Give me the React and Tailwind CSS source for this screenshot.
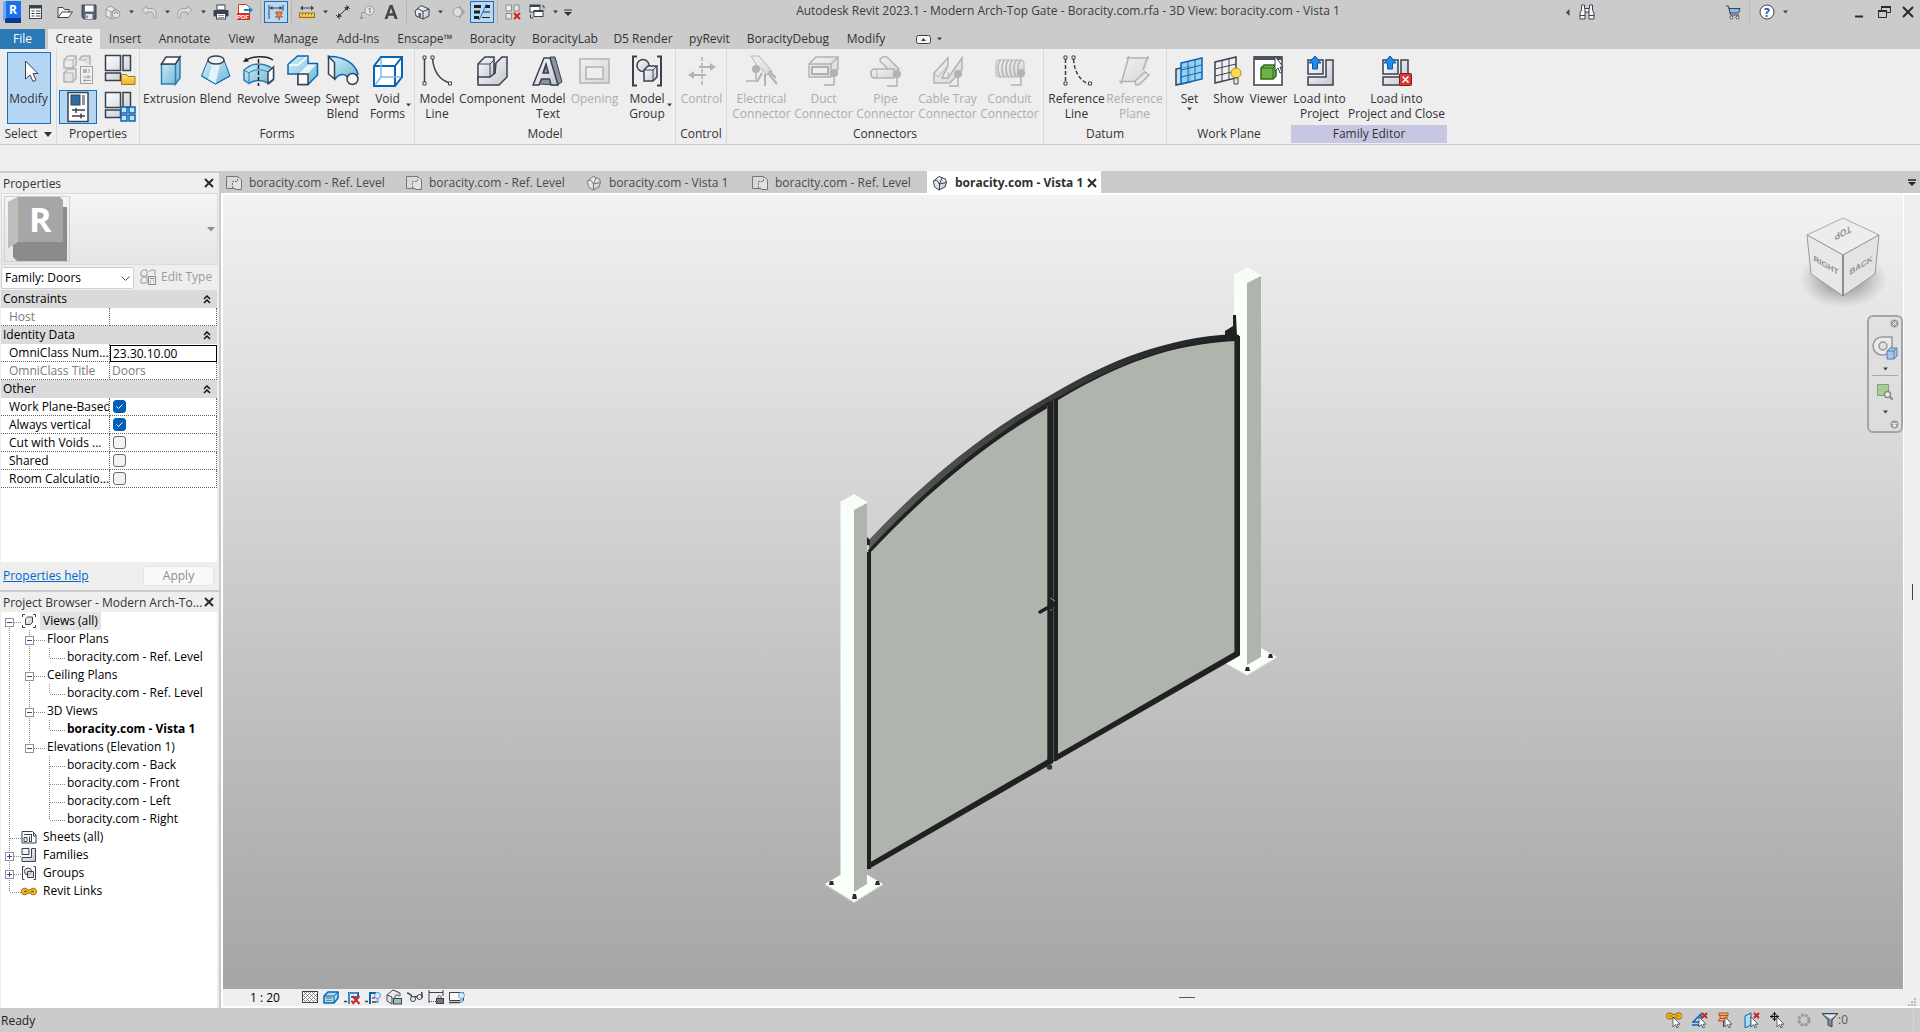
import React, { useState } from 'react';

const INK = '#3a4250';
const BLUE = '#0a64b4';
const DIM = '#b3b3b3';

// Shared gradients, referenced by id from every icon
function Gradients() {
  return (
    <svg className="absolute h-0 w-0" aria-hidden="true">
      <defs>
        <linearGradient id="blue" x1="0" y1="0" x2="1" y2="1">
          <stop offset="0" stopColor="#d2f0f8" />
          <stop offset="1" stopColor="#6fb6d4" />
        </linearGradient>
        <linearGradient id="steel" x1="0" y1="0" x2="1" y2="1">
          <stop offset="0" stopColor="#ffffff" />
          <stop offset="1" stopColor="#c3c6cf" />
        </linearGradient>
        <linearGradient id="pale" x1="0" y1="0" x2="1" y2="1">
          <stop offset="0" stopColor="#f2f2f2" />
          <stop offset="1" stopColor="#d6d6d6" />
        </linearGradient>
        <linearGradient id="gold" x1="0" y1="0" x2="0" y2="1">
          <stop offset="0" stopColor="#ffe27a" />
          <stop offset="1" stopColor="#eab320" />
        </linearGradient>
      </defs>
    </svg>
  );
}

function Svg({ size = 16, children }) {
  return (
    <svg width={size} height={size} viewBox={`0 0 ${size} ${size}`} fill="none" className="block shrink-0" aria-hidden="true">
      {children}
    </svg>
  );
}

const Caret = () => (
  <svg width="5" height="4" viewBox="0 0 5 4" className="block shrink-0" aria-hidden="true">
    <path d="M0 .5h5L2.500 3.500z" fill="#444" />
  </svg>
);

/* ---------- quick access toolbar ---------- */

const quickIcons = {
  list: <><rect x="1.500" y="1.500" width="12" height="13" fill="#fff" stroke={INK} /><path d="M1 3h13" stroke={INK} strokeWidth="3" /><path d="M3.500 7h3M3.500 9.500h3M3.500 12h3M8 7h4.500M8 9.500h4.500M8 12h4.500" stroke={INK} /></>,
  open: <><path d="M1 13.500V3.500h5l1.500 2H12v3" fill="#f4f4f4" stroke={INK} /><path d="M1 13.500l4-5.500h10.500l-4 5.500z" fill="#fff" stroke={INK} /></>,
  save: <><path d="M1 1h14v14H3l-2-2z" fill="#5a6478" stroke={INK} /><rect x="4" y="1.500" width="8.500" height="6" fill="#fff" /><rect x="4.500" y="10" width="7" height="5" fill="#e3e6ec" /><path d="M6 11.500v2.500" stroke={INK} /></>,
  sync: <><path d="M1 5l4-3 4 2 3 3v6l-5 2-6-3z" fill="url(#pale)" stroke="#999" /><path d="M1 5l5 3v6M6 8l5-3" stroke="#999" /><circle cx="11" cy="10" r="4" fill="#e3e3e3" stroke="#999" /><path d="M9 10a2 2 0 0 1 4 0" stroke="#888" /></>,
  undo: <path d="M1 6l5-4v2.500h4c3.500 0 5 2 5 5V14h-2.500v-3.500c0-1.500-1-2.500-2.500-2.500H6v2.500z" fill="#ddd" stroke="#a2a2a2" />,
  redo: <path d="M15 6l-5-4v2.500H6C2.500 4.500 1 6.500 1 9.500V14h2.500v-3.500C3.500 9 4.500 8 6 8h4v2.500z" fill="#ddd" stroke="#a2a2a2" />,
  print: <><rect x="4" y="1" width="8" height="5" fill="#fff" stroke={INK} /><rect x=".5" y="6" width="15" height="6.500" rx="1" fill="#39414e" /><rect x="3.500" y="9.500" width="9" height="5.500" fill="#fff" stroke={INK} /><path d="M5 11.500h6M5 13.500h6" stroke="#8a93a3" /></>,
  pdf: <><path d="M1.500.500h8l3 3v12h-11z" fill="#fff" stroke="#d6301d" /><rect x="0" y="9" width="13" height="7" fill="#dd2c1c" /><text x="0" y="15" fontSize="6" fontWeight="700" fill="#fff" fontFamily="Liberation Sans, sans-serif">PDF</text><path d="M7 5h5V2.500L16 6l-4 3.500V7H7z" fill="#1486e0" /></>,
  lockedDim: <><path d="M1 1v14M15 1v6M2 4h12" stroke={INK} /><path d="M1.500 4l3-2v4zM14.500 4l-3-2v4z" fill={INK} /><path d="M8 8h6v1.500h-1v2l1.500 1.500h-7L9 11.500v-2H8z" fill="#f08b4a" stroke="#b4501b" /><path d="M11 13v3" stroke={INK} /></>,
  measure: <><path d="M2 4h12" stroke={INK} /><path d="M1 4l3-2.500v5zM15 4l-3-2.500v5z" fill={INK} /><rect x=".5" y="9" width="15" height="4.500" fill="url(#gold)" stroke="#9c7106" /><path d="M3.500 9v2M6.500 9v2M9.500 9v2M12.500 9v2" stroke="#9c7106" /></>,
  aligned: <><path d="M3 13L13 3M1 11l4 4M11 1l4 4" stroke={INK} /><path d="M2 14l1.500-5L7 12.500zM14 2l-1.500 5L9 3.500z" fill={INK} /></>,
  tag: <><path d="M2.500 15V8.500H6" stroke="#999" /><path d="M1 14h3" stroke="#999" strokeWidth="2" /><circle cx="10.500" cy="6.500" r="4.500" fill="#e6e6e6" stroke="#999" /><path d="M9.500 5l1.500-1v5" stroke="#777" /></>,
  text: <path d="M1.500 15L6.700 1h2.800L14.700 15h-3l-1.100-3.300H5.500L4.400 15zM6.300 9.300h3.500L8 4z" fill="#464646" fillRule="evenodd" />,
  house: <><path d="M1 7l6-5.500L15 5v7l-6 3-7-3z" fill="url(#steel)" stroke={INK} /><path d="M1 7l3-2.500 5 3V15M9 7.500L15 5" stroke={INK} /><rect x="4.500" y="9" width="2.500" height="4" fill="#5b6575" /></>,
  section: <><path d="M9 1l6 7-6 7V12.500H8v-9h1z" fill="#a3a3a3" /><circle cx="7.500" cy="8" r="4.500" fill="#dedede" stroke="#9b9b9b" /></>,
  thin: <><path d="M0 2.500h7M11 2.500h5M0 8h6M0 13.500h5" stroke="#222" strokeWidth="3" /><path d="M9 8h7M8 13.500h8" stroke="#222" /><path d="M12.500 0L5 16" stroke="#1878d0" /></>,
  hidden: <><path d="M1 1h5.500v6H1zM9 1h5v6H9zM1 9.500h5.500v5.500H1z" fill="url(#pale)" stroke="#8b8b8b" /><path d="M9 9l6 6M15 9l-6 6" stroke="#cc2424" strokeWidth="2" /></>,
  windows: <><rect x="1" y="1" width="10" height="7" fill="#fff" stroke={INK} /><path d="M1 2h10" stroke={INK} strokeWidth="2" /><rect x="5" y="6.500" width="9" height="6" fill="#fff" stroke={INK} /><path d="M5 7.500h9M13 2h2v2.500M1.500 10.500V14H4" stroke={INK} /></>,
};

function QuickButton({ name, active }) {
  return (
    <button
      type="button"
      aria-label={name}
      className={active
        ? 'flex h-[22px] w-6 items-center justify-center border border-[#1a6fc0] bg-[#b9d9f3]'
        : 'flex h-[22px] w-6 items-center justify-center'}
    >
      <Svg>{quickIcons[name]}</Svg>
    </button>
  );
}

const QuickCaret = () => <span className="flex w-3 justify-center"><Caret /></span>;
const QuickLine = () => <span className="mx-[3px] h-[22px] w-px bg-[#b4b4b4]" />;

function TitleBar() {
  return (
    <header className="flex h-[25px] items-start pt-px">
      <div className="flex items-center">
        <button type="button" aria-label="Revit" className="flex w-6 justify-center">
          <svg width="20" height="22" viewBox="0 0 20 22" aria-hidden="true">
            <path d="M3 2h16v20H3z" fill="#0b3d86" />
            <path d="M1 2l3-2h15v17H4l-3 3z" fill="#1d6ff0" />
            <path d="M1 2l3-2v17l-3 3z" fill="#6ea6f8" />
            <text x="7" y="13" fontSize="12" fontWeight="700" fill="#fff" fontFamily="Open Sans, sans-serif">R</text>
          </svg>
        </button>
        <QuickButton name="list" />
        <span className="w-[5px]" />
        <QuickButton name="open" />
        <QuickButton name="save" />
        <QuickButton name="sync" />
        <QuickCaret />
        <QuickButton name="undo" />
        <QuickCaret />
        <QuickButton name="redo" />
        <QuickCaret />
        <QuickButton name="print" />
        <QuickButton name="pdf" />
        <QuickLine />
        <QuickButton name="lockedDim" active />
        <QuickLine />
        <QuickButton name="measure" />
        <QuickCaret />
        <QuickButton name="aligned" />
        <QuickButton name="tag" />
        <QuickButton name="text" />
        <QuickLine />
        <QuickButton name="house" />
        <QuickCaret />
        <QuickButton name="section" />
        <QuickButton name="thin" active />
        <QuickLine />
        <QuickButton name="hidden" />
        <QuickButton name="windows" />
        <QuickCaret />
        <button type="button" aria-label="Customize" className="w-[14px] px-[3px]">
          <svg width="8" height="7" viewBox="0 0 8 7" aria-hidden="true"><path d="M0 1h8" stroke="#333" /><path d="M0 3h8L4 7z" fill="#333" /></svg>
        </button>
      </div>

      <h1 className="flex-1 text-center leading-5 whitespace-nowrap text-[#3c3c3c]">
        Autodesk Revit 2023.1 - Modern Arch-Top Gate - Boracity.com.rfa - 3D View: boracity.com - Vista 1
      </h1>

      <div className="flex h-[22px] items-center">
        <button type="button" aria-label="Collapse search" className="w-3">
          <svg width="12" height="7" viewBox="0 0 12 7" aria-hidden="true"><path d="M8.500 0v7L5 3.500z" fill="#444" /></svg>
        </button>
        <button type="button" aria-label="Search" className="ml-1.5">
          <Svg>
            <path d="M2.500 1h3v3.500h5V1h3v5l1.500 3v6h-5V8h-4v7H1V9l1.500-3z" fill="#f6f6f6" stroke={INK} />
            <path d="M1 11.500h5M10 11.500h5M6 4.500V8M10 4.500V8" stroke={INK} />
          </Svg>
        </button>
        <button type="button" aria-label="Store" className="ml-[130px]">
          <Svg>
            <path d="M1 2h2.500l2 9H14" stroke={INK} />
            <path d="M4 4.500h11l-1.500 4.500H5z" fill="#8fb8ea" stroke={INK} />
            <circle cx="6.500" cy="13.500" r="1.500" fill="#fff" stroke={INK} />
            <circle cx="12.500" cy="13.500" r="1.500" fill="#fff" stroke={INK} />
          </Svg>
        </button>
        <span className="mx-2 h-[22px] w-px bg-[#bababa]" />
        <button type="button" aria-label="Help" className="ml-px">
          <Svg>
            <circle cx="8" cy="8" r="7" fill="#fff" stroke={INK} />
            <text x="5" y="12.500" fontSize="12" fontWeight="700" fill="#1a50c8" fontFamily="Open Sans, sans-serif">?</text>
          </Svg>
        </button>
        <span className="ml-2"><Caret /></span>
        <button type="button" aria-label="Minimize" className="ml-16">
          <Svg><path d="M3 12.500h8" stroke="#2b2b2b" strokeWidth="2" /></Svg>
        </button>
        <button type="button" aria-label="Restore" className="ml-2">
          <Svg><path d="M5.500 6V2.500h9v6H11M2.500 7h8v6.500h-8z" stroke="#2b2b2b" /><path d="M5 3h10M2 7h9" stroke="#2b2b2b" strokeWidth="2" /></Svg>
        </button>
        <button type="button" aria-label="Close" className="mr-1 ml-2">
          <Svg><path d="M3 3l10 10M13 3L3 13" stroke="#2b2b2b" strokeWidth="2" /></Svg>
        </button>
      </div>
    </header>
  );
}

const menuTabs = ['Insert', 'Annotate', 'View', 'Manage', 'Add-Ins', 'Enscape™', 'Boracity', 'BoracityLab', 'D5 Render', 'pyRevit', 'BoracityDebug', 'Modify'];
const menuWidths = ['w-[50px]', 'w-[69px]', 'w-[45px]', 'w-[63px]', 'w-[62px]', 'w-[72px]', 'w-[63px]', 'w-[82px]', 'w-[74px]', 'w-[59px]', 'w-[98px]', 'w-[58px]'];

function MenuTabs() {
  return (
    <nav className="flex h-6 items-end">
      <button type="button" className="h-5 w-[45px] bg-[#2a7ab5] text-white">File</button>
      <button type="button" className="ml-[3px] h-5 w-[52px] bg-[#eeeeee]">Create</button>
      {menuTabs.map((tab, i) => (
        <button key={tab} type="button" className={`h-5 whitespace-nowrap text-center ${menuWidths[i]}`}>{tab}</button>
      ))}
      <button type="button" aria-label="Ribbon display" className="ml-[21px] flex h-5 items-center gap-1.5">
        <svg width="15" height="9" viewBox="0 0 15 9" aria-hidden="true"><rect x=".5" y=".5" width="14" height="8" rx="2" fill="#f4f4f4" stroke={INK} /><path d="M5 6h5L7.500 3z" fill={INK} /></svg>
        <Caret />
      </button>
    </nav>
  );
}

/* ---------- ribbon ---------- */

const ribbonIcons = {
  Modify: <path d="M12.500 6v18l4.500-4 3 6.500 3-1.500-3-6.500h5z" fill="#fff" stroke={INK} />,
  Extrusion: <><path d="M7.500 9h14v20h-14zM21.500 9L26 2v21l-4.500 6z" fill="url(#blue)" stroke="#2b7cb8" strokeWidth="1.500" /><path d="M7.500 9L12 2h14l-4.500 7z" fill="#fff" stroke={INK} strokeWidth="1.500" /></>,
  Blend: <><path d="M8 5L1.500 21 15.500 29 30 21 24 5z" fill="url(#blue)" stroke={BLUE} /><path d="M12 9L8 24.500 15.500 29 20 9z" fill="#e1f4fa" /><path d="M1.500 21l14 8L30 21" stroke={BLUE} /><ellipse cx="16" cy="5" rx="8" ry="4" fill="#f1f1f3" stroke={INK} strokeWidth="1.500" /></>,
  Revolve: <><path d="M2 6C8 .5 24 .5 30 5" stroke="#222" strokeWidth="1.500" /><path d="M0 7l6-.5L3 2.500z" fill="#222" /><path d="M1 15l5-3.500C12 8 20 8 26 11.500l4.500 3V25L26 28.500c-7-4-14-4-20 0L1 25z" fill="url(#blue)" stroke="#2b7cb8" strokeWidth="1.500" /><path d="M30.500 12v12L25 28.500V17z" fill="#fff" stroke={INK} strokeWidth="1.500" /><path d="M1 15l5 3c5-4 13-4 19-1M6 18v10" stroke="#2b7cb8" /><path d="M15.500 4v27" stroke="#222" strokeWidth="1.500" strokeDasharray="4 2" /></>,
  Sweep: <><path d="M1 9.500L10.500 1H21v7.500h9.500V20L21 29.500H11V19H1z" fill="url(#blue)" stroke={BLUE} strokeWidth="1.500" /><path d="M2 10h9L20 2" stroke="#fff" strokeWidth="1.500" /><path d="M12 18.500L21 9.500h8l-8 9" fill="#e2f5fb" /><path d="M11 19h10v10.500H11z" fill="#fafafa" stroke={INK} strokeWidth="1.500" /></>,
  SweptBlend: <><path d="M1.500 1.500C16 1 28 8 31 19l-9 6C20 19 14 17 8 24z" fill="url(#blue)" stroke={BLUE} strokeWidth="1.500" /><path d="M1.500 1.500l6 6V24l-6-5z" fill="#f4f4f6" stroke={INK} strokeWidth="1.500" /><circle cx="25.500" cy="24" r="5.500" fill="#f7f7f9" stroke={INK} strokeWidth="1.500" /></>,
  Void: <><path d="M2 11L9 2h21v20l-7 9H2z" fill="#fff" stroke={BLUE} strokeWidth="2" /><path d="M2 11h21v20M23 11l7-9" stroke={BLUE} strokeWidth="2" /><path d="M9 3v19h20M9 22l-6 8" stroke="#79bdf2" strokeWidth="1.500" /></>,
  ModelLine: <><path d="M3.500 3v25M11.500 3c1 14 8 22 17 25" stroke={INK} strokeWidth="1.500" /><path d="M2 1h3v3H2zM2 27h3v3H2zM10 1h3v3h-3zM27.500 27h3v3h-3z" fill="#fff" stroke={INK} /></>,
  Component: <><path d="M2 9l7-7h9v18l-5 5H2z" fill="url(#steel)" stroke={INK} strokeWidth="1.500" /><path d="M20 8l6-6h5v20l-8 8H2v-8h12l5-4z" fill="url(#steel)" stroke={INK} strokeWidth="1.500" /><path d="M14 9v13M19 8v10M2 9h12l4-4" stroke={INK} /></>,
  ModelText: <><path d="M7 29L18 2h5l7 25-5 3z" fill="#8b93a3" stroke={INK} /><path d="M1 30L12 3h6l8 27h-7l-1.500-6H9.500L7 30zM11 18h5.500L14 9z" fill="url(#steel)" fillRule="evenodd" stroke={INK} strokeWidth="1.500" /></>,
  Opening: <><rect x="1" y="4" width="29" height="24" fill="url(#pale)" stroke={DIM} strokeWidth="1.500" /><rect x="7" y="12" width="17" height="12" fill="#eee" stroke={DIM} strokeWidth="1.500" /></>,
  ModelGroup: <><path d="M6 1.500H2v29h4M26 1.500h4v29h-4" stroke={INK} strokeWidth="2" /><circle cx="12" cy="10.500" r="6" fill="url(#steel)" stroke={INK} strokeWidth="1.500" /><path d="M13 15l4-4h9v11l-4 4h-9z" fill="url(#steel)" stroke={INK} strokeWidth="1.500" /><path d="M13 15h9v11M22 15l4-4" stroke={INK} /></>,
  Control: <><path d="M16 2v28" stroke={DIM} strokeDasharray="4 2" strokeWidth="1.500" /><path d="M13 12h13M6 20h14" stroke={DIM} strokeWidth="2" /><path d="M24 8l6 4-6 4zM8 16l-6 4 6 4z" fill={DIM} /></>,
  Electrical: <><path d="M5 1h8l13 15-5 4L10 9z" fill="url(#pale)" stroke={DIM} /><path d="M19 19v12M22 18l9 11M23 16l7 7M16 18l-5 9" stroke={DIM} strokeWidth="2" /><circle cx="10" cy="14" r="4" fill={DIM} /><path d="M10 17v9H0" stroke={DIM} strokeWidth="1.500" /></>,
  Duct: <><path d="M1 9l7-7h22v12l-7 8H1z" fill="url(#pale)" stroke={DIM} strokeWidth="1.500" /><path d="M1 9h22v13M23 9l7-7" stroke={DIM} strokeWidth="1.500" /><rect x="4" y="12" width="16" height="7" fill="#eee" stroke="#9e9e9e" strokeWidth="1.500" /><circle cx="26" cy="18" r="4" fill={DIM} /><path d="M26 20v10H16" stroke={DIM} strokeWidth="1.500" /></>,
  Pipe: <><path d="M10 6c0-4 5-6 8-3l11 11-6 5z" fill="url(#pale)" stroke={DIM} strokeWidth="1.500" /><path d="M4 14h20v9H4c-4-1-4-8 0-9z" fill="url(#pale)" stroke={DIM} strokeWidth="1.500" /><ellipse cx="4" cy="18.500" rx="3" ry="4.500" stroke={DIM} /><circle cx="27" cy="19" r="4" fill={DIM} /><path d="M27 21v10H17" stroke={DIM} strokeWidth="1.500" /></>,
  Tray: <><path d="M2 18L16 3v8l-6 12h6L30 3v12L18 28H2z" fill="url(#pale)" stroke={DIM} strokeWidth="1.500" /><path d="M2 18l4 4L16 11M16 23V17" stroke={DIM} /><circle cx="26" cy="19" r="4" fill={DIM} /><path d="M26 21v10H17" stroke={DIM} strokeWidth="1.500" /></>,
  Conduit: <><rect x="2" y="5" width="28" height="17" rx="3" fill="url(#pale)" stroke={DIM} /><path d="M7 5c-4 3-4 14 0 17M11 5c-4 3-4 14 0 17M15 5c-4 3-4 14 0 17M19 5c-4 3-4 14 0 17M23 5c-4 3-4 14 0 17M27 5c-4 3-4 14 0 17" stroke={DIM} strokeWidth="1.500" /><circle cx="27" cy="18" r="4" fill={DIM} /><path d="M27 20v10H17" stroke={DIM} strokeWidth="1.500" /></>,
  RefLine: <><path d="M4.500 4v24M12.500 4c1 13 6 21 15 25" stroke={INK} strokeWidth="1.500" strokeDasharray="4 2" /><path d="M3 1h3v3H3zM3 27h3v3H3zM11 1h3v3h-3zM27.500 27h3v3h-3z" fill="#fff" stroke={INK} /></>,
  RefPlane: <><path d="M9 3h21l-8 24H2z" fill="url(#pale)" /><path d="M7 3h23M0 26.500h22M10 1L2 29M29 1l-5 14" stroke={DIM} strokeWidth="1.500" /><path d="M17 30l-1-4 10-9 4 3-9 9z" fill="#e6e6e6" stroke={DIM} strokeWidth="1.500" /></>,
  Set: <><path d="M2 14v16l14-3V11z" fill="#bfe0f5" stroke={INK} strokeWidth="1.500" /><path d="M7 8l21-5v21L7 29z" fill="#8ccbee" fillOpacity=".85" stroke={BLUE} strokeWidth="1.500" /><path d="M14 6.500v21M21 5v21M7 15l21-5M7 22l21-5" stroke={BLUE} /></>,
  Show: <><path d="M2 7l21-5v21L2 28z" fill="#f0f0f2" stroke={INK} strokeWidth="1.500" /><path d="M9 5.500v21M16 4v21M2 14l21-5M2 21l21-5" stroke={INK} /><circle cx="23" cy="18" r="5" fill="#ffd94f" stroke="#b98a10" /><path d="M21 23h4v6h-4z" fill="#e8e8ea" stroke={INK} /></>,
  Viewer: <><rect x="1" y="2" width="28" height="28" fill="#fff" stroke={INK} strokeWidth="1.500" /><path d="M1 3h28" stroke="#4d5260" strokeWidth="4" /><path d="M8 13l3-3h12v11l-3 3H8z" fill="#6fb04c" stroke="#2c6b12" strokeWidth="1.500" /><path d="M8 13h12v11M20 13l3-3" stroke="#2c6b12" /><path d="M22 1v15l3-3 2 5 2-1-2-5h3z" fill="#fff" stroke={INK} /></>,
  Load: <><path d="M4 5h15v14H4zM22 5h7v25H4v-8h18z" fill="url(#steel)" stroke={INK} strokeWidth="1.500" /><path d="M11 1l6 7h-3.500v6h-5V8H5z" fill="#1f8df0" stroke="#0a56a8" /></>,
  LoadClose: <><path d="M2 5h15v14H2zM20 5h7v25H2v-8h18z" fill="url(#steel)" stroke={INK} strokeWidth="1.500" /><path d="M9 1l6 7h-3.500v6h-5V8H3z" fill="#1f8df0" stroke="#0a56a8" /><rect x="18.500" y="18.500" width="12" height="12" rx="1" fill="#d63a3a" stroke="#8f1515" /><path d="M21.500 21.500l6 6M27.500 21.500l-6 6" stroke="#fff" strokeWidth="1.500" /></>,
};

function Tool({ icon, lines, width, disabled, caret, below }) {
  return (
    <button
      type="button"
      disabled={disabled}
      className={`relative flex h-[73px] flex-col items-center pt-[3px] ${width} ${disabled ? 'text-[#adadad]' : ''}`}
    >
      <Svg size={32}>{ribbonIcons[icon]}</Svg>
      <span className="mt-1 leading-[15px] whitespace-nowrap">
        {lines.map((line) => <span key={line} className="block">{line}</span>)}
      </span>
      {below && <span className="mt-px"><Caret /></span>}
      {caret && <span className="absolute right-[2px] bottom-[18px]"><Caret /></span>}
    </button>
  );
}

function Panel({ label, width, children, accent, last }) {
  return (
    <section className={`flex shrink-0 flex-col ${width} ${last ? '' : 'border-r border-[#d9d9d9]'}`}>
      <div className="flex h-[76px] justify-center pt-[3px] pl-px">{children}</div>
      <h2 className={`h-[18px] text-center leading-[18px] ${accent ? 'bg-[#c7c7e4]' : ''}`}>{label}</h2>
    </section>
  );
}

const plan = (
  <path d="M1.500 1.500h15v15h-15zM19 1.500h7.500v15H19zM1.500 19h15v7.500h-15z" fill="url(#steel)" stroke={INK} strokeWidth="1.500" />
);

function Ribbon() {
  return (
    <div className="flex h-24 shrink-0 border-b border-[#c8c8c8] bg-[#eeeeee]">
      <Panel width="w-[57px]" label={<span className="flex items-center justify-center gap-1.5">Select <svg width="8" height="5" viewBox="0 0 8 5" aria-hidden="true"><path d="M0 0h8L4 5z" fill="#333" /></svg></span>}>
        <button type="button" className="flex h-[72px] w-11 flex-col items-center border border-[#1a6fc0] bg-[#b5d6f3] pt-0.5">
          <Svg size={32}>{ribbonIcons.Modify}</Svg>
          <span className="mt-1 leading-[15px]">Modify</span>
        </button>
      </Panel>
      <Panel width="w-[83px]" label="Properties">
        <div className="grid grid-cols-2 gap-x-1 gap-y-px">
          <button type="button" aria-label="Family types" className="flex h-9 w-[38px] items-center justify-center">
            <Svg size={32}>
              <path d="M2 6l4-4h8v9l-3 3H2zM17 6l3-4h8v9M2 19l4-4h8v9l-3 4H2z" fill="url(#pale)" stroke={DIM} strokeWidth="1.500" />
              <path d="M2 6h9v8M11 6l3-4M2 19h9v9M17 6h8" stroke={DIM} />
              <rect x="18.500" y="12.500" width="12" height="17" fill="#f0f0f0" stroke="#a0a0a0" />
              <path d="M21 15h4v4h-4z" fill={DIM} /><path d="M27 15v4M21 23h8M21 26.500h8M26 21v4M23 25v3" stroke="#a0a0a0" />
            </Svg>
          </button>
          <button type="button" aria-label="Family category" className="flex h-9 w-[38px] items-center justify-center">
            <Svg size={32}>
              {plan}
              <path d="M17.500 30.500v-10h5l1.500 2h7v8z" fill="url(#gold)" stroke="#a57a0c" />
            </Svg>
          </button>
          <button type="button" aria-label="Properties palette" className="flex h-[34px] w-[38px] items-center justify-center border border-[#1a6fc0] bg-[#b5d6f3]">
            <Svg size={32}>
              <rect x="6" y="1.500" width="20" height="29" fill="#fff" stroke={INK} strokeWidth="1.500" />
              <rect x="9" y="4" width="9" height="10" fill="#2d6ba6" stroke={INK} /><path d="M21.500 4v10" stroke="#9098a6" strokeWidth="3" />
              <path d="M10 19h13M10 25h13M14 17v5M19 22.500v5" stroke={INK} strokeWidth="1.500" />
            </Svg>
          </button>
          <button type="button" aria-label="Family types grid" className="flex h-[34px] w-[38px] items-center justify-center">
            <Svg size={32}>
              {plan}
              <path d="M17 16h6v6h-6zM25 16h6v6h-6zM17 24h6v6h-6zM25 24h6v6h-6z" fill="#bfe3f7" stroke={BLUE} strokeWidth="1.500" />
            </Svg>
          </button>
        </div>
      </Panel>
      <Panel width="w-[275px]" label="Forms">
        <Tool icon="Extrusion" lines={['Extrusion']} width="w-[54px]" />
        <Tool icon="Blend" lines={['Blend']} width="w-[38px]" />
        <Tool icon="Revolve" lines={['Revolve']} width="w-12" />
        <Tool icon="Sweep" lines={['Sweep']} width="w-10" />
        <Tool icon="SweptBlend" lines={['Swept', 'Blend']} width="w-10" />
        <Tool icon="Void" lines={['Void', 'Forms']} width="w-[50px]" caret />
      </Panel>
      <Panel width="w-[261px]" label="Model">
        <Tool icon="ModelLine" lines={['Model', 'Line']} width="w-10" />
        <Tool icon="Component" lines={['Component']} width="w-[70px]" />
        <Tool icon="ModelText" lines={['Model', 'Text']} width="w-[42px]" />
        <Tool icon="Opening" lines={['Opening']} width="w-[51px]" disabled />
        <Tool icon="ModelGroup" lines={['Model', 'Group']} width="w-[54px]" caret />
      </Panel>
      <Panel width="w-[51px]" label="Control">
        <Tool icon="Control" lines={['Control']} width="w-12" disabled />
      </Panel>
      <Panel width="w-[317px]" label="Connectors">
        <Tool icon="Electrical" lines={['Electrical', 'Connector']} width="w-[62px]" disabled />
        <Tool icon="Duct" lines={['Duct', 'Connector']} width="w-[62px]" disabled />
        <Tool icon="Pipe" lines={['Pipe', 'Connector']} width="w-[62px]" disabled />
        <Tool icon="Tray" lines={['Cable Tray', 'Connector']} width="w-[62px]" disabled />
        <Tool icon="Conduit" lines={['Conduit', 'Connector']} width="w-[62px]" disabled />
      </Panel>
      <Panel width="w-[123px]" label="Datum">
        <Tool icon="RefLine" lines={['Reference', 'Line']} width="w-[58px]" />
        <Tool icon="RefPlane" lines={['Reference', 'Plane']} width="w-[58px]" disabled />
      </Panel>
      <Panel width="w-[124px]" label="Work Plane" last>
        <Tool icon="Set" lines={['Set']} width="w-10" below />
        <Tool icon="Show" lines={['Show']} width="w-[38px]" />
        <Tool icon="Viewer" lines={['Viewer']} width="w-[42px]" />
      </Panel>
      <Panel width="w-[156px]" label="Family Editor" accent last>
        <Tool icon="Load" lines={['Load into', 'Project']} width="w-[54px]" />
        <Tool icon="LoadClose" lines={['Load into', 'Project and Close']} width="w-[100px]" />
      </Panel>
    </div>
  );
}

/* ---------- left side ---------- */

function PaneHeader({ title }) {
  return (
    <div className="flex h-5 shrink-0 items-center justify-between pr-[5px] pl-[3px] text-[#333]">
      <h2 className="pt-0.5 leading-[18px] whitespace-nowrap">{title}</h2>
      <button type="button" aria-label="Close pane" className="shrink-0">
        <svg width="10" height="10" viewBox="0 0 10 10" aria-hidden="true"><path d="M1 1l8 8M9 1L1 9" stroke="#2b2b2b" strokeWidth="2" /></svg>
      </button>
    </div>
  );
}

function GroupRow({ title }) {
  return (
    <tr>
      <th colSpan={2} scope="colgroup" className="h-[18px] bg-[#dadada] p-0 px-0.5 text-left font-normal">
        <span className="flex items-center justify-between pr-1">
          {title}
          <svg width="8" height="9" viewBox="0 0 8 9" fill="none" aria-hidden="true"><path d="M1 4l3-3 3 3M1 8l3-3 3 3" stroke="#111" strokeWidth="1.500" /></svg>
        </span>
      </th>
    </tr>
  );
}

const nameCell = 'h-[18px] overflow-hidden whitespace-nowrap border-r border-b border-dotted border-[#666] p-0 pl-2 text-left font-normal leading-4';
const valueCell = 'h-[18px] border-r border-b border-dotted border-[#666] p-0 leading-4';

function CheckRow({ id, label, initial }) {
  const [checked, setChecked] = useState(initial);
  return (
    <tr>
      <th scope="row" className={nameCell}><label htmlFor={id}>{label}</label></th>
      <td className={valueCell}>
        <span className="relative ml-[3px] block h-[13px] w-[13px]">
          <input
            id={id}
            type="checkbox"
            checked={checked}
            onChange={(e) => setChecked(e.target.checked)}
            className="block h-[13px] w-[13px] appearance-none rounded-[3px] border border-[#6b6b6b] bg-[#f3f3f3] checked:border-[#005fb8] checked:bg-[#005fb8]"
          />
          {checked && (
            <svg width="13" height="13" viewBox="0 0 13 13" fill="none" className="pointer-events-none absolute inset-0" aria-hidden="true"><path d="M3.500 6.500l2 2 4-4" stroke="#fff" /></svg>
          )}
        </span>
      </td>
    </tr>
  );
}

function PropertiesPane() {
  const [omni, setOmni] = useState('23.30.10.00');
  return (
    <section className="flex h-[417px] shrink-0 flex-col">
      <PaneHeader title="Properties" />
      <div className="mx-px flex h-[72px] items-center justify-between border border-[#dcdcdc] bg-linear-to-b from-[#f5f5f5] to-[#e5e5e5] px-0.5">
        <div className="border border-[#d0d0d0]">
          <svg width="64" height="64" viewBox="0 0 64 64" className="block" aria-hidden="true">
            <path d="M8 10h54v54H12l-4-4z" fill="#8b8b8b" />
            <path d="M3 5l10-5h42l3 3v42H13L3 51z" fill="#a6a6a6" />
            <path d="M3 5l10-5v45L3 51z" fill="#bdbdbd" />
            <text x="24" y="35" fontSize="34" fontWeight="700" fill="#fff" fontFamily="Open Sans, sans-serif">R</text>
          </svg>
        </div>
        <svg width="8" height="5" viewBox="0 0 8 5" aria-hidden="true"><path d="M0 0h8L4 4.500z" fill="#8e8e8e" /></svg>
      </div>
      <div className="flex h-[25px] items-center pr-2 pl-px">
        <div className="relative w-[133px] shrink-0">
          <select aria-label="Family" className="h-[22px] w-full appearance-none rounded-xs border border-[#cfcfcf] bg-white pl-[3px] text-black">
            <option>Family: Doors</option>
          </select>
          <svg width="9" height="5" viewBox="0 0 9 5" fill="none" className="pointer-events-none absolute top-[9px] right-1" aria-hidden="true"><path d="M.5.500l4 4 4-4" stroke="#555" /></svg>
        </div>
        <button type="button" disabled className="mb-0.5 ml-1.5 flex items-center gap-[5px] whitespace-nowrap text-[#9c9c9c]">
          <Svg><path d="M1 3l2-2h4v6H1zM9 3l2-2h4v5M1 10l2-2h4v6H1z" stroke="#9c9c9c" /><rect x="8.500" y="7.500" width="7" height="8" fill="#eee" stroke="#8c8c8c" /><path d="M10 9.500h4M10 12h1M13 12h1M10 14h1" stroke="#8c8c8c" /></Svg>
          Edit Type
        </button>
      </div>
      <div className="mr-0.5 ml-px flex-1 bg-white">
        <table className="w-full table-fixed border-separate border-spacing-0 text-black">
          <colgroup><col className="w-[109px]" /><col /></colgroup>
          <tbody>
            <GroupRow title="Constraints" />
            <tr><th scope="row" className={`${nameCell} text-[#7a7a7a]`}>Host</th><td className={valueCell} /></tr>
            <GroupRow title="Identity Data" />
            <tr>
              <th scope="row" className={nameCell}><label htmlFor="omni">OmniClass Num...</label></th>
              <td className="h-[18px] p-0">
                <input id="omni" value={omni} onChange={(e) => setOmni(e.target.value)} className="block h-[17px] w-full border border-black bg-white px-0.5 leading-[14px]" />
              </td>
            </tr>
            <tr className="text-[#7a7a7a]"><th scope="row" className={nameCell}>OmniClass Title</th><td className={`${valueCell} pl-0.5`}>Doors</td></tr>
            <GroupRow title="Other" />
            <CheckRow id="workPlane" label="Work Plane-Based" initial />
            <CheckRow id="vertical" label="Always vertical" initial />
            <CheckRow id="voids" label="Cut with Voids ..." initial={false} />
            <CheckRow id="shared" label="Shared" initial={false} />
            <CheckRow id="room" label="Room Calculatio..." initial={false} />
          </tbody>
        </table>
      </div>
      <div className="flex h-7 items-center justify-between pr-[5px] pl-[3px]">
        <a href="#help" className="text-[#0066cc] underline">Properties help</a>
        <button type="button" disabled className="h-5 w-[71px] rounded-sm border border-[#e6e6e6] bg-[#f9f9f9] text-[#8c8c8c]">Apply</button>
      </div>
    </section>
  );
}

const treeIcons = {
  views: <><path d="M4 1.500H1.500V4M12 1.500h2.500V4M1.500 12v2.500H4M14.500 12v2.500H12" stroke={INK} /><path d="M4.500 6l2-2h5v5.500l-2 2h-5z" fill="url(#steel)" stroke={INK} /></>,
  sheets: <><path d="M1 2.500h10.500L15 6v8H1z" fill="#fff" stroke={INK} /><path d="M3 5.500h7M3 8.500h3v4H3zM8.500 12.500V7.500M10.500 5v7.500H8M12.500 3v4H15" stroke={INK} /></>,
  families: <><path d="M1 1.500h7v6H1zM10.500 1.500h4v13H1v-4h9.500z" fill="url(#steel)" stroke={INK} /></>,
  groups: <><path d="M3.500 1.500h-2v13h2M12.500 1.500h2v13h-2" stroke={INK} /><circle cx="7" cy="6.500" r="3.500" fill="url(#steel)" stroke={INK} /><path d="M6.500 6.500h6v6h-6z" fill="#d5d8de" fillOpacity=".7" stroke={INK} /></>,
  links: <><path d="M7 7C5.500 4.500.5 4.500.5 8.500S5.500 12.500 7 10h2c1.500 2.500 6.500 2.500 6.500-1.500S10.500 4.500 9 7z" fill="#f5b921" stroke="#8a6208" /><path d="M3 8.500h3M10 8.500h3" stroke="#8a6208" strokeWidth="1.500" /></>,
};

// guides: | through, + tee, L corner, m/M/e expanded box (first/middle/last), p collapsed box
const tree = [
  { guides: 'm', icon: 'views', label: 'Views (all)', selected: true },
  { guides: '|M', label: 'Floor Plans' },
  { guides: '||L', label: 'boracity.com - Ref. Level' },
  { guides: '|M', label: 'Ceiling Plans' },
  { guides: '||L', label: 'boracity.com - Ref. Level' },
  { guides: '|M', label: '3D Views' },
  { guides: '||L', label: 'boracity.com - Vista 1', bold: true },
  { guides: '|e', label: 'Elevations (Elevation 1)' },
  { guides: '| +', label: 'boracity.com - Back' },
  { guides: '| +', label: 'boracity.com - Front' },
  { guides: '| +', label: 'boracity.com - Left' },
  { guides: '| L', label: 'boracity.com - Right' },
  { guides: '+', icon: 'sheets', label: 'Sheets (all)' },
  { guides: 'p', icon: 'families', label: 'Families' },
  { guides: 'p', icon: 'groups', label: 'Groups' },
  { guides: 'L', icon: 'links', label: 'Revit Links' },
];

function Guide({ kind, wide }) {
  const up = '|+LMep'.includes(kind);
  const down = '|+mMp'.includes(kind);
  const side = '+LmMep'.includes(kind);
  const box = 'mMep'.includes(kind);
  const w = wide ? 24 : 20;
  return (
    <svg width={w} height="18" viewBox={`0 0 ${w} 18`} fill="none" className="block shrink-0" aria-hidden="true">
      <g stroke="#8a8a8a" strokeDasharray="1 1">
        {up && <path d="M8.500 0v10" />}
        {down && <path d="M8.500 10v8" />}
        {side && <path d={`M9 10.500h${w - 9}`} />}
      </g>
      {box && <rect x="4.500" y="6.500" width="8" height="8" fill="#fff" stroke="#919191" />}
      {box && <path d="M6 10.500h5" stroke="#2b4fa0" />}
      {kind === 'p' && <path d="M8.500 8v5" stroke="#2b4fa0" />}
    </svg>
  );
}

function ProjectBrowser() {
  return (
    <section className="flex min-h-0 flex-1 flex-col border-t-2 border-[#cbcbcb]">
      <PaneHeader title="Project Browser - Modern Arch-To..." />
      <ul className="mr-0.5 ml-px flex-1 overflow-hidden bg-white text-black">
        {tree.map((row, i) => (
          <li key={i} className="flex h-[18px] items-center whitespace-nowrap">
            {row.guides.split('').map((kind, g) => (
              <Guide key={g} kind={kind} wide={g > 0 && g === row.guides.length - 1} />
            ))}
            {row.icon && <Svg>{treeIcons[row.icon]}</Svg>}
            <span className={`leading-[18px] ${row.icon ? 'ml-[3px] px-[3px]' : 'px-0.5'} ${row.selected ? 'bg-[#e2e2e2]' : ''} ${row.bold ? 'font-bold' : ''}`}>{row.label}</span>
          </li>
        ))}
      </ul>
    </section>
  );
}

/* ---------- drawing area ---------- */

const PlanIcon = () => (
  <Svg><path d="M.5 1.500h11v12H.5z" fill="#d9d9d9" stroke="#777" /><path d="M6 8h4V2.500h3l2.500 2.500v9.500H9V11H6z" fill="#e2e2e2" /><path d="M11.500 2.500H13L15.500 5v9.500H9.500v-1" stroke="#777" /><path d="M6.500 13V6.500h5V3" stroke="#777" strokeDasharray="2 1" /></Svg>
);
const CubeIcon = ({ color }) => (
  <Svg><path d="M1.500 6L7 1.500 13.500 4l1 3.500L13 12l-6 3-4.500-3z" fill="url(#steel)" stroke={color} /><path d="M1.500 6l3-1 3 4V15M7.500 9L10 3M7.500 9l7-1.500" stroke={color} /></Svg>
);

const viewTabs = [
  { label: 'boracity.com - Ref. Level', width: 'w-[180px]' },
  { label: 'boracity.com - Ref. Level', width: 'w-[180px]' },
  { label: 'boracity.com - Vista 1', width: 'w-[166px]', cube: true },
  { label: 'boracity.com - Ref. Level', width: 'w-[180px]' },
];

function ViewTabs() {
  return (
    <div className="flex h-[22px] shrink-0 bg-[#cbcbcb] pr-1">
      {viewTabs.map((tab, i) => (
        <button key={i} type="button" className={`flex items-center gap-[7px] pt-0.5 pl-[5px] whitespace-nowrap text-[#4a4a4a] ${tab.width}`}>
          {tab.cube ? <CubeIcon color="#777" /> : <PlanIcon />}
          {tab.label}
        </button>
      ))}
      <div className="flex h-full w-[174px] items-center justify-between bg-white pt-0.5 pr-1 pl-[5px]">
        <button type="button" className="flex items-center gap-[7px] font-bold whitespace-nowrap text-[#2f2f2f]">
          <CubeIcon color={INK} />
          boracity.com - Vista 1
        </button>
        <button type="button" aria-label="Close view">
          <svg width="10" height="10" viewBox="0 0 10 10" aria-hidden="true"><path d="M1 1l8 8M9 1L1 9" stroke="#2b2b2b" strokeWidth="2" /></svg>
        </button>
      </div>
      <button type="button" aria-label="View list" className="ml-auto">
        <svg width="8" height="7" viewBox="0 0 8 7" aria-hidden="true"><path d="M0 1h8" stroke="#222" strokeWidth="1.500" /><path d="M0 3h8L4 7z" fill="#222" /></svg>
      </button>
    </div>
  );
}

function Gate() {
  const panel = '#afb4ad';
  const dark = '#202221';
  return (
    <svg viewBox="223 195 1680 794" className="absolute inset-0 h-full w-full" role="img" aria-label="Gate model">
      <defs>
        <linearGradient id="archLeft" x1="0" y1="1" x2="1" y2="0"><stop offset="0" stopColor="#5c5e5d" /><stop offset="1" stopColor="#3a3c3b" /></linearGradient>
        <linearGradient id="archRight" x1="0" y1="1" x2="1" y2="0"><stop offset="0" stopColor="#3e403f" /><stop offset="1" stopColor={dark} /></linearGradient>
      </defs>
      {/* right post */}
      <path d="M1225 663l22 12 30-18-16-9-21 8z" fill="#fbfffa" />
      <path d="M1225 663l22 12 30-18v1l-30 18z" fill="#d9ddd7" />
      <path d="M1234 275h13v390l-13-8z" fill="#f9fff9" />
      <path d="M1247 282l14-7v382l-14 8z" fill={panel} />
      <path d="M1233 275l14-8 15 8.500-15 7.500z" fill="#f7fcf6" />
      {/* leaves */}
      <path d="M868 550C930 484 985 440 1050 404V762L868 867z" fill={panel} />
      <path d="M1055 400c60-34 115-57 182-60v313l-182 105z" fill={panel} />
      {/* arch */}
      <path d="M868 541C927 478 985 432 1049 396l3 6C990 438 930 487 870 552z" fill="url(#archLeft)" />
      <path d="M868 550.500C928 485.500 985 440 1050 401v5.500C990 441 930 489 869 554z" fill={dark} />
      <path d="M1049 396c60-36 117-58 184-62l6 1v6c-67 2-122 24-181 59l-8 4z" fill="url(#archRight)" />
      <path d="M1052 401c60-35 120-60 187-63v2.500c-67 2-122 24-181 59.500z" fill={dark} />
      {/* stiles and rails */}
      <path d="M867 552h4v317h-4z" fill={dark} />
      <path d="M1047 403l11-6v363l-11 4z" fill={dark} />
      <path d="M1047.500 406v354M1053.500 400v360" stroke="#4b4d4c" />
      <path d="M1234 336h6v319h-6z" fill={dark} />
      <path d="M1234.500 341v312" stroke="#5b5d5b" />
      <path d="M868 863.500l181-105 4 3v1.500L868 869.500z" fill={dark} />
      <path d="M1055 755.500l181-104.500 4 4.500-185 106z" fill={dark} />
      {/* hardware */}
      <path d="M1233 315h3l1 21h-12v-5l8-5z" fill={dark} />
      <path d="M867 537l3 3v5h-3z" fill={dark} />
      <path d="M1040 612l16-9" stroke={dark} strokeWidth="3.500" strokeLinecap="round" />
      <path d="M1050 598l5 3M1051 609v2" stroke="#888" />
      <circle cx="1049.500" cy="767" r="2.800" fill="#343635" />
      {/* left post */}
      <path d="M825 884l29-17 29 17-29 18z" fill="#fbfffa" />
      <path d="M825 884l29 18 29-18v1l-29 18-29-18z" fill="#d9ddd7" />
      <path d="M840.500 502h14v390l-14-8z" fill="#f9fff9" />
      <path d="M854 509l13-7v382l-13 8z" fill={panel} />
      <path d="M840 502l14-8 14 8.500-14 7.500z" fill="#f7fcf6" />
      <g fill="#2a2c2b">
        <path d="M830 881h3l1 4h-5zM876 881h3l1 4h-5zM853 894h3l1 5h-5zM1246 667h3l1 4h-5zM1269 654h3l1 4h-5z" />
      </g>
    </svg>
  );
}

function ViewCube() {
  return (
    <svg width="90" height="95" viewBox="0 0 90 95" className="absolute top-[20px] right-[15px]" role="img" aria-label="View cube">
      <defs>
        <radialGradient id="cubeShadow"><stop offset="0.300" stopColor="#777" stopOpacity="0.700" /><stop offset="1" stopColor="#999" stopOpacity="0" /></radialGradient>
      </defs>
      <ellipse cx="45" cy="64" rx="44" ry="29" fill="url(#cubeShadow)" />
      <path d="M9 20L45 3l36 17-36 20z" fill="#ededed" stroke="#aaa" />
      <path d="M9 20l36 20v41L13 59z" fill="#e8e8e8" stroke="#999" />
      <path d="M45 40l36-20-4 39-32 22z" fill="#e3e3e3" stroke="#999" />
      <path d="M45 40v41" stroke="#666" />
      <g fill="#8f9298" fontSize="9" fontWeight="700" fontFamily="Liberation Sans, sans-serif">
        <text transform="translate(45 19) rotate(152) skewX(-20)" textAnchor="middle" x="0" y="4">TOP</text>
        <text transform="translate(28 50) skewY(30)" textAnchor="middle" x="0" y="3" fontSize="8">RIGHT</text>
        <text transform="translate(63 50) skewY(-32)" textAnchor="middle" x="0" y="3" fontSize="8">BACK</text>
      </g>
    </svg>
  );
}

function NavBar() {
  return (
    <div className="absolute top-[120px] right-0 flex h-[118px] w-9 flex-col items-center rounded-md border-2 border-[#a5a5a5] bg-[#dedede]/60 py-0.5">
      <button type="button" aria-label="Close navigation bar" className="mr-0.5 self-end">
        <svg width="9" height="9" viewBox="0 0 9 9" className="block" aria-hidden="true"><circle cx="4.500" cy="4.500" r="4" fill="#9c9c9c" /><path d="M2.500 2.500l4 4M6.500 2.500l-4 4" stroke="#fff" /></svg>
      </button>
      <button type="button" aria-label="Steering wheel" className="mt-[7px] flex flex-col items-center gap-[6px]">
        <Svg size={26}>
          <path d="M10 2h10v8c0 6-4 10-10 10A9 9 0 0 1 10 2z" fill="#eaeaea" stroke="#999" strokeWidth="1.500" />
          <circle cx="11" cy="11" r="4" fill="#e0e0e0" stroke="#999" strokeWidth="1.500" />
          <path d="M15 16l3-3h7v8l-3 3h-7z" fill="#a8c8e8" stroke="#4f7fb0" /><path d="M15 16h7v8M22 16l3-3" stroke="#4f7fb0" />
        </Svg>
        <Caret />
      </button>
      <span className="mt-1 h-px w-[26px] shrink-0 bg-[#aaa]" />
      <button type="button" aria-label="Zoom region" className="mt-2 flex flex-col items-center gap-[10px]">
        <Svg><path d="M.5.500h11v11H.5z" fill="#a9cb98" stroke="#7fa56d" /><circle cx="10.500" cy="10.500" r="3" fill="#eee" stroke="#888" strokeWidth="1.500" /><path d="M13 13l3 3" stroke="#888" strokeWidth="2" /></Svg>
        <Caret />
      </button>
      <button type="button" aria-label="Navigation options" className="mt-auto mr-0.5 self-end">
        <svg width="9" height="9" viewBox="0 0 9 9" className="block" aria-hidden="true"><circle cx="4.500" cy="4.500" r="4" fill="#9c9c9c" /><path d="M2 3.500h5M3 5h3l-1.500 2z" stroke="#fff" fill="#fff" strokeWidth=".8" /></svg>
      </button>
    </div>
  );
}

const viewControls = {
  'Detail level': <><rect x=".5" y="2.500" width="15" height="11" fill="#fff" stroke={INK} /><path d="M2 3l10 10M6 3l9 9M10 3l5 5M1 6l7 7M1 10l3 3M5 3L1 7M9 3L1 11M13 3L3 13M15 5l-8 8M15 9l-4 4" stroke="#777" strokeWidth=".8" /></>,
  'Visual style': <><path d="M1 7l4-4h10v6l-4 5H1z" fill="#a8dcf5" stroke={BLUE} strokeWidth="1.500" /><path d="M1 7h10v7M11 7l4-4" stroke={BLUE} /><path d="M3 9h6" stroke="#d33" /><path d="M3 11.500h6" stroke="#2fbf4a" /></>,
  'Crop view': <><path d="M5 15V4h9v3" stroke={BLUE} strokeWidth="2" /><path d="M5 15V4h9" stroke="#9fd0f0" strokeWidth=".7" /><path d="M0 12.500h3M7 8h8M7 12.500h2" stroke={INK} strokeWidth="1.500" /><path d="M8.500 7l7 8M15.500 7l-7 8" stroke="#cc2424" strokeWidth="2" /></>,
  'Show crop': <><path d="M5 15V4h6" stroke={BLUE} strokeWidth="2" /><path d="M0 12.500h3M7 13h5" stroke={INK} strokeWidth="1.500" /><path d="M7 9h3" stroke="#c33" strokeWidth="1.500" /><circle cx="12.500" cy="6.500" r="3" fill="#d8ecff" stroke="#4b8fd0" /><path d="M11.500 10h2.500v4h-2.500z" fill="#9bb9d8" /></>,
  'Lock view': <><path d="M1 6l6-5 7 3v3M1 6v6l5 3M1 6l5 2v7" fill="url(#steel)" stroke={INK} /><path d="M9 10V7.500c0-2 4-2 4 0" stroke={INK} /><rect x="7.500" y="9.500" width="8" height="5.500" fill="#9cc0b0" stroke={INK} /></>,
  'Temporary hide': <><path d="M0 4c3 0 4 2 6 5 2-2 4-2 5 0M15 3c-1 2 1 4 0 6" stroke={INK} strokeWidth="1.500" /><circle cx="6" cy="10" r="2.500" fill="#e6eef6" stroke={INK} /><circle cx="12.500" cy="8" r="2.500" fill="#e6eef6" stroke={INK} /></>,
  'Reveal constraints': <><path d="M1 1v13M15 1v6M1 3.500h14" stroke={INK} /><path d="M1 12.500h7" stroke={INK} strokeDasharray="1 1" /><path d="M10 10V8c0-2 3-2 3 0v2" stroke="#555" /><rect x="8.500" y="9.500" width="7" height="5" fill="#777" stroke={INK} /></>,
  'Temporary properties': <><path d="M.5 3.500h14v8H.5z" fill="#fafafa" stroke={INK} /><path d="M0 13.500h11" stroke={INK} strokeWidth="1.500" /><circle cx="12.500" cy="6.500" r="3" fill="#d8ecff" stroke="#6da4d8" /><path d="M11 10h3v4h-3z" fill="#9bb9d8" /></>,
};

function ViewArea() {
  return (
    <main className="flex min-w-0 flex-1 flex-col">
      <ViewTabs />
      <div className="flex min-h-0 flex-1 flex-col border-t-2 border-b-2 border-l-2 border-white bg-[#efefef]">
        <div className="flex min-h-0 flex-1">
          <div className="relative flex-1 border-r border-white bg-linear-to-b from-[#f2f2f2] to-[#a5a5a5]">
            <Gate />
            <ViewCube />
            <NavBar />
          </div>
          <div className="flex w-4 items-center justify-center">
            <span className="h-4 w-px bg-[#444]" />
          </div>
        </div>
        <div className="flex h-[17px] items-center">
          <button type="button" className="ml-[27px] w-[52px] text-left text-black">1 : 20</button>
          <div className="flex gap-[5px] pb-0.5">
            {Object.keys(viewControls).map((name) => (
              <button key={name} type="button" aria-label={name}><Svg>{viewControls[name]}</Svg></button>
            ))}
          </div>
          <span className="flex flex-1 justify-center"><span className="h-px w-4 bg-[#555]" /></span>
          <svg width="8" height="8" viewBox="0 0 8 8" className="mr-1 self-end" aria-hidden="true"><path d="M6 0h2v2H6zM3 3h2v2H3zM6 3h2v2H6zM0 6h2v2H0zM3 6h2v2H3zM6 6h2v2H6z" fill="#b8b8b8" /></svg>
        </div>
      </div>
    </main>
  );
}

const pointer = <path d="M7 5v10l2.500-2.500L11 16l1.500-.8-1.500-3h3z" fill="#fff" stroke={INK} strokeWidth=".8" />;
const cross = <path d="M10 1l5 5M15 1l-5 5" stroke="#cc2424" strokeWidth="2" />;

const statusIcons = {
  'Select links': <><path d="M7 2.500C5 0 0 .5 0 4s5 4 7 1.500h2C11 8 16 7.500 16 4S11 0 9 2.500z" fill="#f5b921" stroke="#8a6208" /><path d="M2.500 4h4M9.500 4h4" stroke="#8a6208" />{pointer}</>,
  'Select underlay': <><path d="M0 13h8M1 10l8-8v8z" stroke={BLUE} strokeWidth="1.500" fill="#cfe6f8" />{cross}{pointer}</>,
  'Select pinned': <><path d="M1 1h9v2.500H9v3l2 2.500H0l2-2.500v-3H1z" fill="#f3a878" stroke="#b4501b" /><path d="M2 3.500h7M2 6.500h7" stroke="#b4501b" /><path d="M5.500 9v6" stroke={INK} />{pointer}</>,
  'Select by face': <><path d="M1 4l6-3v12l-6 3z" fill="#a9dbf5" stroke={BLUE} />{cross}{pointer}</>,
  'Drag on selection': <><path d="M4.500 0v9M0 4.500h9" stroke="#111" /><path d="M2.500 2.500l2-2.500 2 2.500zM2.500 6.500l2 2.500 2-2.500zM2.500 2.500L0 4.500l2.500 2zM6.500 2.500l2.500 2-2.500 2z" fill="#111" />{pointer}</>,
  'Background processes': <circle cx="8" cy="8" r="5" stroke="#9a9a9a" strokeWidth="3" strokeDasharray="3 1" />,
};

function StatusBar() {
  return (
    <footer className="flex h-6 shrink-0 items-center bg-[#cbcbcb] text-[#222]">
      <span className="pt-0.5 pl-px">Ready</span>
      <div className="ml-auto flex items-center gap-[10px]">
        {Object.keys(statusIcons).map((name) => (
          <button key={name} type="button" aria-label={name}><Svg>{statusIcons[name]}</Svg></button>
        ))}
        <button type="button" className="flex items-center text-[#6b5a4a]">
          <Svg><path d="M0 1.500h16L10 8v7l-4-2V8z" fill="#7f8a9c" stroke={INK} /><path d="M1.500 2.500h13L9 7z" fill="#e3e8ef" /></Svg>
          :0
        </button>
      </div>
      <span className="mr-1.5 ml-[65px] h-5 w-px bg-[#d9d9d9]" />
    </footer>
  );
}

export default function App() {
  return (
    <div className="flex h-screen min-h-[720px] flex-col overflow-hidden bg-[#cbcbcb] font-['Open_Sans','Noto_Sans',sans-serif] text-[12px] text-[#333]">
      <Gradients />
      <TitleBar />
      <MenuTabs />
      <Ribbon />
      <div className="h-[26px] shrink-0 bg-[#eeeeee]" />
      <div className="flex min-h-0 flex-1">
        <aside className="flex w-[219px] shrink-0 flex-col border-t-2 border-[#cbcbcb] bg-[#eeeeee]">
          <PropertiesPane />
          <ProjectBrowser />
        </aside>
        <span className="w-0.5 shrink-0 bg-[#cbcbcb]" />
        <ViewArea />
      </div>
      <StatusBar />
    </div>
  );
}
